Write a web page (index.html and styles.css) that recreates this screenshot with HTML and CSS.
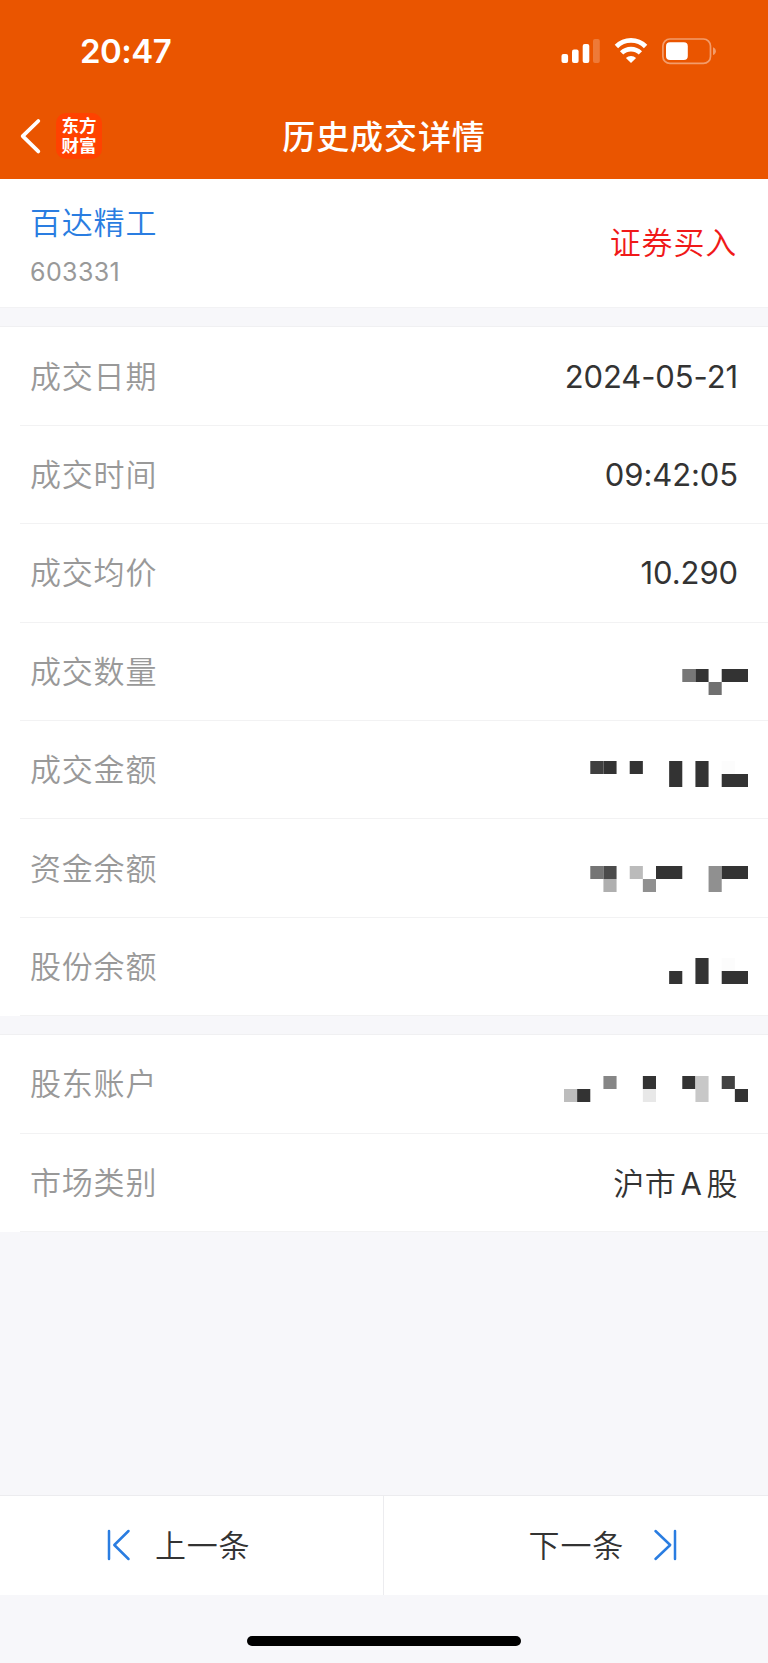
FILE: index.html
```
<!DOCTYPE html>
<html lang="zh-CN">
<head>
  <meta charset="UTF-8">
  <meta name="viewport" content="width=device-width, initial-scale=1.0">
  <title>历史成交详情</title>
  <link rel="stylesheet" href="styles.css">
</head>
<body>
  <header class="header">
    <div class="status-bar">
      <span class="clock">20:47</span>
      <svg class="status-icons" width="156" height="28" viewBox="0 0 156 28">
        <g fill="#fff">
          <rect x="1.5" y="16" width="6.6" height="9" rx="2"/>
          <rect x="12" y="11.5" width="6.6" height="13.5" rx="2"/>
          <rect x="22.7" y="6" width="6.6" height="19" rx="2"/>
          <rect x="33" y="1" width="6.8" height="24" rx="2" opacity=".22"/>
          <path d="M71 25l-5.1-5.1a7.5 7.5 0 0 1 10.2 0z"/>
          <rect x="106" y="4.2" width="21.8" height="17.8" rx="4"/>
          <path d="M153 9.3c3.8 1.2 3.8 6.6 0 7.8z" opacity=".42"/>
        </g>
        <g fill="none" stroke="#fff">
          <path d="M56.4 8.5a20.5 20.5 0 0 1 29.2 0" stroke-width="4.7"/>
          <path d="M61.6 14.9a13.4 13.4 0 0 1 18.8 0" stroke-width="4.7"/>
          <rect x="102.9" y="1" width="47.6" height="24.4" rx="7" stroke-width="1.7" opacity=".42"/>
        </g>
      </svg>
    </div>
    <div class="nav-bar">
      <div class="nav-left">
        <svg class="back" width="24" height="38" viewBox="0 0 24 38">
          <path d="M20.3 4L4.7 19.2l15.6 15.2" fill="none" stroke="#fff" stroke-width="3.8" stroke-linecap="round" stroke-linejoin="round"/>
        </svg>
        <div class="logo">东方<br>财富</div>
      </div>
      <h1 class="title">历史成交详情</h1>
    </div>
  </header>

  <section class="stock">
    <div>
      <div class="stock-name">百达精工</div>
      <div class="stock-code">603331</div>
    </div>
    <div class="direction">证券买入</div>
  </section>

  <section class="group">
    <div class="row"><span class="label">成交日期</span><span class="value">2024-05-21</span></div>
    <div class="row"><span class="label">成交时间</span><span class="value">09:42:05</span></div>
    <div class="row"><span class="label">成交均价</span><span class="value">10.290</span></div>
    <div class="row">
      <span class="label">成交数量</span>
      <svg class="mask mask-amount" width="184" height="26" viewBox="0 0 14 2" preserveAspectRatio="none">
        <path fill="#777" d="M9 0h1v1h-1z"/>
        <path fill="#333" d="M10 0h1v1h-1zM12 0h2v1h-2z"/>
        <path fill="#707070" d="M11 1h1v1h-1z"/>
      </svg>
    </div>
    <div class="row">
      <span class="label">成交金额</span>
      <svg class="mask mask-money" width="184" height="26" viewBox="0 0 14 2" preserveAspectRatio="none">
        <path fill="#3f3f3f" d="M2 0h1v1h-1z"/>
        <path fill="#333" d="M3 0h1v1h-1zM5 0h1v1h-1zM8 0h1v2h-1zM10 0h1v2h-1zM12 1h2v1h-2z"/>
        <path fill="#fcfcfc" d="M12 0h1v1h-1z"/>
      </svg>
    </div>
    <div class="row">
      <span class="label">资金余额</span>
      <svg class="mask mask-cash" width="184" height="26" viewBox="0 0 14 2" preserveAspectRatio="none">
        <path fill="#757575" d="M2 0h1v1h-1z"/>
        <path fill="#4b4b4b" d="M3 0h1v1h-1z"/>
        <path fill="#afafaf" d="M3 1h1v1h-1z"/>
        <path fill="#bbb" d="M5 0h1v1h-1z"/>
        <path fill="#909090" d="M6 1h1v1h-1zM11 0h1v2h-1z"/>
        <path fill="#333" d="M7 0h2v1h-2zM12 0h2v1h-2z"/>
      </svg>
    </div>
    <div class="row">
      <span class="label">股份余额</span>
      <svg class="mask mask-share" width="184" height="26" viewBox="0 0 14 2" preserveAspectRatio="none">
        <path fill="#333" d="M8 1h1v1h-1zM10 0h1v2h-1zM12 1h2v1h-2z"/>
        <path fill="#fcfcfc" d="M12 0h1v1h-1z"/>
      </svg>
    </div>
  </section>

  <section class="group">
    <div class="row">
      <span class="label">股东账户</span>
      <svg class="mask mask-account" width="184" height="26" viewBox="0 0 14 2" preserveAspectRatio="none">
        <path fill="#bdbdbd" d="M0 1h1v1h-1z"/>
        <path fill="#333" d="M1 1h1v1h-1zM6 0h1v1h-1zM9 0h1v1h-1zM13 1h1v1h-1z"/>
        <path fill="#868686" d="M3 0h1v1h-1z"/>
        <path fill="#e8e8e8" d="M6 1h1v1h-1z"/>
        <path fill="#c8c8c8" d="M10 0h1v2h-1z"/>
        <path fill="#424242" d="M12 0h1v1h-1z"/>
      </svg>
    </div>
    <div class="row"><span class="label">市场类别</span><span class="market">沪市<span class="latin">A</span>股</span></div>
  </section>

  <footer class="footer">
    <div class="pager">
      <div class="page-btn prev">
        <svg width="24" height="32" viewBox="0 0 24 32" fill="none" stroke="#2a7de1" stroke-width="2.5" stroke-linecap="round" stroke-linejoin="round">
          <path d="M2 2v28M21.5 2L7.3 16l14.2 14"/>
        </svg>
        <span>上一条</span>
      </div>
      <div class="page-btn next">
        <span>下一条</span>
        <svg width="24" height="32" viewBox="0 0 24 32" fill="none" stroke="#2a7de1" stroke-width="2.5" stroke-linecap="round" stroke-linejoin="round">
          <path d="M22 2v28M2.5 2l14.7 14L2.5 30"/>
        </svg>
      </div>
    </div>
    <div class="home-indicator"></div>
  </footer>
</body>
</html>
```

FILE: styles.css
```
* {
  box-sizing: border-box;
}

body {
  margin: 0;
  height: 1663px;
  display: flex;
  flex-direction: column;
  background-color: #f7f7fa;
  color: #333;
  font-family: Inter, "Noto Sans CJK SC", sans-serif;
  font-size: 31px;
  font-weight: 350;
  overflow: hidden;
}

svg {
  display: block;
  flex: none;
}

/* Header */
.header {
  height: 179px;
  background-color: #ea5500;
  color: #fff;
}

.status-bar {
  height: 100px;
  padding: 38px 52px 0 80px;
  display: flex;
  justify-content: space-between;
}

.clock {
  height: 28px;
  line-height: 27px;
  font-size: 33px;
  font-weight: 600;
  letter-spacing: -0.5px;
}

.nav-bar {
  height: 72px;
  display: grid;
  grid-template-columns: 1fr auto 1fr;
  align-items: center;
}

.nav-left {
  display: flex;
  align-items: center;
  padding-left: 18px;
}

.logo {
  width: 46px;
  height: 46px;
  margin-left: 14px;
  padding-top: 3px;
  border-radius: 10px;
  background-color: #ff4200;
  font-size: 17.5px;
  font-weight: 700;
  line-height: 19.5px;
  text-align: center;
}

.title {
  margin: 2px 0 0;
  font-size: 33px;
  font-weight: 500;
  letter-spacing: 0.9px;
  line-height: 40px;
}

/* Stock info */
.stock {
  height: 129px;
  padding: 0 31px 0 30px;
  display: flex;
  align-items: center;
  justify-content: space-between;
  background-color: #fff;
  border-bottom: 1px solid #f2f2f4;
}

.stock-name {
  color: #2a7de1;
  line-height: 44px;
  letter-spacing: 0.8px;
  margin-top: 4px;
}

.stock-code {
  color: #999;
  font-size: 25px;
  font-weight: 400;
  line-height: 36px;
  letter-spacing: 0.4px;
  margin-top: 9px;
}

.direction {
  color: #f01919;
  letter-spacing: 0.8px;
  margin-bottom: 6px;
}

/* Detail rows */
.group {
  margin-top: 18px;
  padding-left: 20px;
  background-color: #fff;
  border-top: 1px solid #f0f0f2;
}

.stock + .group {
  margin-top: 18.4px;
}

.row {
  height: 98.4px;
  padding: 0 31px 0 10px;
  display: flex;
  align-items: center;
  justify-content: space-between;
  border-bottom: 1px solid #f2f2f3;
}

.label {
  color: #999;
  letter-spacing: 0.8px;
  margin-bottom: 4px;
}

.value {
  font-weight: 400;
  letter-spacing: -0.1px;
  margin-right: -1px;
}

.mask {
  margin-right: -11px;
}

.mask-amount {
  margin-top: 22px;
}

.mask-money {
  margin-top: 9px;
}

.mask-cash {
  margin-top: 22px;
}

.mask-share {
  margin-top: 9px;
}

.mask-account {
  margin-top: 11px;
}

.market {
  letter-spacing: 0.6px;
  margin: 0 -1px 2px 0;
}

.latin {
  font-weight: 400;
  margin: 0 4px;
}

/* Footer */
.footer {
  margin-top: auto;
  height: 168.5px;
}

.pager {
  height: 100.5px;
  display: flex;
  background-color: #fff;
  border-top: 1px solid #ececef;
}

.page-btn {
  width: 50%;
  display: flex;
  align-items: center;
  letter-spacing: 0.8px;
}

.page-btn span {
  margin-bottom: 4px;
}

.prev {
  padding-left: 107px;
  gap: 24px;
  border-right: 1px solid #ececef;
}

.next {
  justify-content: flex-end;
  padding-right: 91px;
  gap: 29px;
}

.home-indicator {
  width: 274px;
  height: 10px;
  margin: 41px auto 0;
  border-radius: 5px;
  background-color: #000;
}
```
